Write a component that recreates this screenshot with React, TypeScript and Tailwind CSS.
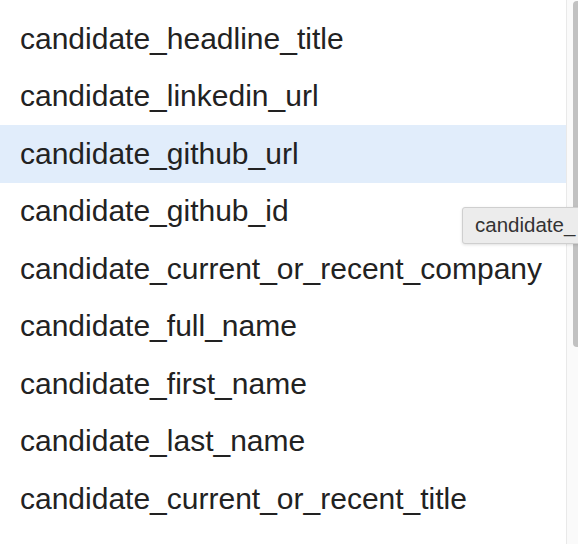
const items = [
  'candidate_headline_title',
  'candidate_linkedin_url',
  'candidate_github_url',
  'candidate_github_id',
  'candidate_current_or_recent_company',
  'candidate_full_name',
  'candidate_first_name',
  'candidate_last_name',
  'candidate_current_or_recent_title',
]

export default function App() {
  return (
    <div
      className="relative flex h-[544px] w-[578px] overflow-hidden rounded-bl-[10px] bg-white text-[#222]"
      style={{ fontFamily: '"Liberation Sans", Arial, sans-serif' }}
    >
      <ul className="flex-1 pt-[10px]">
        {items.map((item, i) => (
          <li
            key={item}
            className={
              'flex h-[57.5px] items-center pl-[20px] text-[30px] leading-none ' +
              (i === 2 ? 'bg-[#e1edfb]' : '')
            }
          >
            {item}
          </li>
        ))}
      </ul>

      {/* scrollbar */}
      <div className="w-[12px] shrink-0 border-l border-[#e9e9e9] bg-[#fafafa] pl-[6px] pt-[1px]">
        <div className="h-[346px] w-[8px] rounded-[4px] bg-[#c1c1c1]" />
      </div>

      {/* tooltip, cut by the window edge */}
      <div className="absolute left-[462px] top-[207px] flex h-[37px] w-[130px] items-center whitespace-nowrap rounded-l-[3px] border border-[#cfcfcf] bg-[#ececec] pl-[12px] text-[20.5px] text-[#333] shadow-[0_1px_3px_rgba(0,0,0,0.12)]">
        candidate_
      </div>
    </div>
  )
}
